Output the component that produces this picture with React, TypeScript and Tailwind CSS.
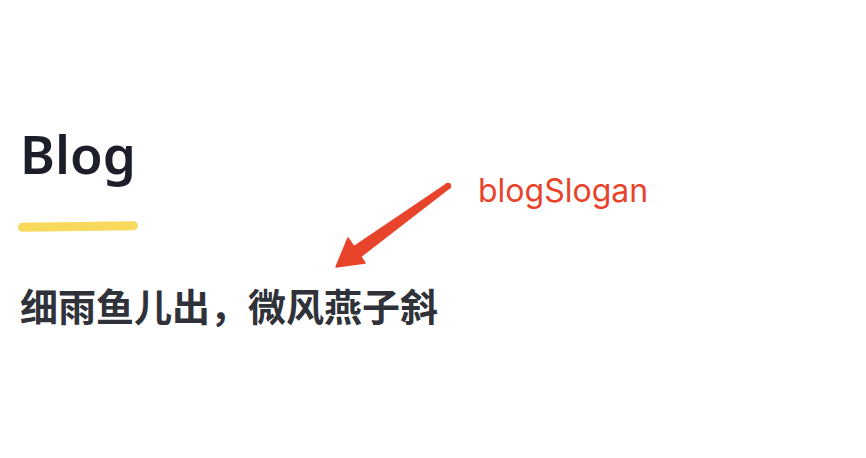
export default function App() {
  return (
    <div className="relative w-[866px] h-[458px] bg-white overflow-hidden">
      <div className="flex flex-col items-start pl-5 pt-[114px]">
        <h1 className="text-[53px] leading-[80px] font-semibold text-[#1c1f2a]" style={{ fontFamily: '"Noto Sans", sans-serif' }}>
          Blog
        </h1>
        <div className="mt-[28px] -ml-[2px] w-[120px] h-[9px] rounded-full bg-[#f8d95c] -rotate-[0.8deg]" />
        <p className="mt-[52px] text-[38px] leading-[44px] font-semibold text-[#30323a]" style={{ fontFamily: '"Noto Sans CJK SC", sans-serif' }}>
          细雨鱼儿出，微风燕子斜
        </p>
      </div>
      <div className="absolute left-[478px] top-[171px] text-[32px] leading-[40px] text-[#e8442c]" style={{ fontFamily: 'Inter, sans-serif' }}>
        blogSlogan
      </div>
      <svg className="absolute left-0 top-0" width="866" height="458">
        <circle cx="448" cy="186" r="3.2" fill="#e8442c" />
        <path d="M449.9 188.6 L359.9 258.1 L352.1 246.9 L446.1 183.4 Z" fill="#e8442c" />
        <path d="M336 267 L348 238 L365 263 Z" fill="#e8442c" stroke="#e8442c" strokeWidth="1.5" strokeLinejoin="round" />
      </svg>
    </div>
  );
}
